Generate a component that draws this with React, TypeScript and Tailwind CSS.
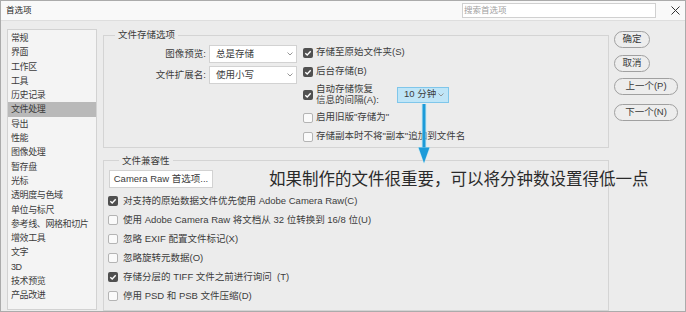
const NAV = [
  "常规",
  "界面",
  "工作区",
  "工具",
  "历史记录",
  "文件处理",
  "导出",
  "性能",
  "图像处理",
  "暂存盘",
  "光标",
  "透明度与色域",
  "单位与标尺",
  "参考线、网格和切片",
  "增效工具",
  "文字",
  "3D",
  "技术预览",
  "产品改进",
];

const COMPAT = [
  { label: "对支持的原始数据文件优先使用 Adobe Camera Raw(C)", on: true },
  { label: "使用 Adobe Camera Raw 将文档从 32 位转换到 16/8 位(U)", on: false },
  { label: "忽略 EXIF 配置文件标记(X)", on: false },
  { label: "忽略旋转元数据(O)", on: false },
  { label: "存储分层的 TIFF 文件之前进行询问  (T)", on: true },
  { label: "停用 PSD 和 PSB 文件压缩(D)", on: false },
];

function Check({ on }: { on: boolean }) {
  if (on) {
    return (
      <span className="flex h-[10px] w-[10px] shrink-0 items-center justify-center rounded-[2px] bg-[#505050]">
        <svg width="8" height="8" viewBox="0 0 8 8">
          <path d="M1.3 4.2 L3.2 6 L6.7 2.2" fill="none" stroke="#fff" strokeWidth="1.4" />
        </svg>
      </span>
    );
  }
  return <span className="h-[10px] w-[10px] shrink-0 rounded-[2px] border border-[#b4b4b4] bg-[#fafafa]" />;
}

function Chevron() {
  return (
    <svg width="6" height="4" viewBox="0 0 6 4" className="shrink-0">
      <path d="M0.5 0.5 L3 3 L5.5 0.5" fill="none" stroke="#8a8a8a" strokeWidth="0.9" />
    </svg>
  );
}

function Select({ value }: { value: string }) {
  return (
    <div className="flex h-[18px] w-[88px] items-center justify-between border border-[#d2d2d2] bg-white pl-[6px] pr-[3px]">
      <span>{value}</span>
      <Chevron />
    </div>
  );
}

function Row({ on, children }: { on: boolean; children: React.ReactNode }) {
  return (
    <div className="flex h-[19px] items-center">
      <Check on={on} />
      <span className="ml-[3px] whitespace-nowrap">{children}</span>
    </div>
  );
}

function PillButton({ label, w, mt }: { label: string; w: string; mt: string }) {
  return (
    <button
      className={`flex h-[17px] items-center justify-center rounded-full border border-[#a0a0a0] bg-[#ededed] text-[9.5px] text-[#3a3a3a] ${w} ${mt}`}
    >
      {label}
    </button>
  );
}

export default function App() {
  return (
    <div className="relative h-[312px] w-[686px] overflow-hidden border border-[#ababab] bg-[#ececec] font-['Liberation_Sans','Noto_Sans_CJK_SC',sans-serif] text-[9.5px] text-[#3c3c3c]">
      {/* title bar */}
      <div className="flex h-[20px] items-center border-b border-[#dedede] bg-[#f9f9f9]">
        <span className="ml-[5px] flex-1 text-[8.5px] text-[#222]">首选项</span>
        <div className="flex h-[15px] w-[194px] items-center border border-[#d0d0d0] bg-white pl-[1px] text-[8.5px] text-[#a0a0a0]">
          搜索首选项
        </div>
        <svg width="9" height="9" viewBox="0 0 9 9" className="ml-[15px] mr-[5px]">
          <path d="M0.5 0.5 L8.5 8.5 M8.5 0.5 L0.5 8.5" stroke="#333" strokeWidth="1" />
        </svg>
      </div>

      <div className="flex h-[290px]">
        {/* sidebar */}
        <div className="ml-[6px] mt-[8px] h-[281px] w-[90px] border border-[#d2d2d2] bg-[#f4f4f4] pt-px text-[9px] tracking-[-0.4px]">
          {NAV.map((n) => (
            <div
              key={n}
              className={`h-[14.3px] pl-[3px] leading-[14.3px] ${n === "文件处理" ? "bg-[#b9b9b9]" : ""}`}
            >
              {n}
            </div>
          ))}
        </div>

        {/* main */}
        <div className="ml-[6px] flex w-[506px] flex-col pt-[7px]">
          <fieldset className="h-[122px] border border-[#d4d4d4]">
            <legend className="ml-[11px] px-[3px] leading-[14px]">文件存储选项</legend>
            <div className="flex">
              <div className="flex w-[193px] flex-col items-end gap-[3px] pt-[3px]">
                <div className="flex items-center">
                  <span className="mr-[3px]">图像预览:</span>
                  <Select value="总是存储" />
                </div>
                <div className="flex items-center">
                  <span className="mr-[3px]">文件扩展名:</span>
                  <Select value="使用小写" />
                </div>
              </div>
              <div className="ml-[6px] flex flex-col pt-px">
                <Row on>存储至原始文件夹(S)</Row>
                <Row on>后台存储(B)</Row>
                <div className="flex h-[27px] items-center">
                  <Check on />
                  <div className="ml-[3px] w-[81px] leading-[10.5px]">
                    自动存储恢复
                    <br />
                    信息的间隔(A):
                  </div>
                  <div className="flex h-[16px] w-[52px] items-center justify-between border border-[#7fc6ea] bg-[#bfe5f7] pl-[6px] pr-[4px]">
                    <span>10 分钟</span>
                    <Chevron />
                  </div>
                </div>
                <Row on={false}>启用旧版"存储为"</Row>
                <Row on={false}>存储副本时不将"副本"追加到文件名</Row>
              </div>
            </div>
          </fieldset>

          <fieldset className="mt-[6px] h-[160px] border border-[#d4d4d4] pl-[4px]">
            <legend className="ml-[11px] px-[3px] leading-[14px]">文件兼容性</legend>
            <div className="pt-[2px]">
              <div className="ml-px flex h-[18px] w-[104px] items-center justify-center border border-[#d2d2d2] bg-white">
                Camera Raw 首选项...
              </div>
              <div className="mt-[4px]">
                {COMPAT.map((c) => (
                  <div key={c.label} className="flex h-[19px] items-center">
                    <Check on={c.on} />
                    <span className="ml-[5px] whitespace-pre">{c.label}</span>
                  </div>
                ))}
              </div>
            </div>
          </fieldset>
        </div>

        {/* buttons */}
        <div className="ml-[5px] flex flex-col items-start pt-[10px]">
          <PillButton label="确定" w="w-[36px]" mt="mt-0" />
          <PillButton label="取消" w="w-[36px]" mt="mt-[7px]" />
          <PillButton label="上一个(P)" w="w-[64px]" mt="mt-[6px]" />
          <PillButton label="下一个(N)" w="w-[64px]" mt="mt-[9px]" />
        </div>
      </div>

      {/* annotation overlay */}
      <svg width="18" height="64" viewBox="0 0 18 64" className="absolute left-[414px] top-[102px]">
        <path d="M9 1 V46" stroke="#aee6f7" strokeWidth="5" opacity="0.6" />
        <path d="M9 1 V46" stroke="#1c9bd9" strokeWidth="3" />
        <polygon points="2.5,44 15.5,44 9,61" fill="#aee6f7" opacity="0.6" />
        <polygon points="3.5,44.5 14.5,44.5 9,60" fill="#1c9bd9" />
      </svg>
      <div className="absolute left-[268px] top-[167px] whitespace-nowrap font-['Noto_Sans_CJK_SC',sans-serif] text-[16.5px] leading-[20px] text-[#2a2a2a]">
        如果制作的文件很重要，可以将分钟数设置得低一点
      </div>
    </div>
  );
}
